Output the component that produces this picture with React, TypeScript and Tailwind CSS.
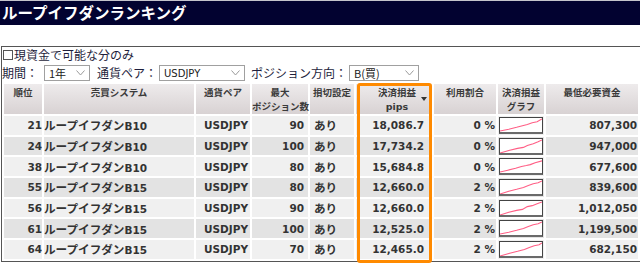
import React from "react";

const jp = "font-['Noto_Sans_CJK_JP',sans-serif]";
const num = "font-['DejaVu_Sans','Noto_Sans_CJK_JP',sans-serif]";

const rows = [
  { rank: 21, sys: "B10", max: 90, pips: "18,086.7", use: "0 %", min: "807,300", g: "0,14 9,12 17,10 24,8 28,7 33,5 38,4 43,1" },
  { rank: 24, sys: "B10", max: 100, pips: "17,734.2", use: "0 %", min: "947,000", g: "0,15 10,12 18,10 24,9 28,7 34,5 39,3 43,1" },
  { rank: 38, sys: "B10", max: 80, pips: "15,684.8", use: "0 %", min: "677,600", g: "0,14 8,12 16,10 22,8 27,7 31,6 36,4 43,2" },
  { rank: 55, sys: "B15", max: 80, pips: "12,660.0", use: "2 %", min: "839,600", g: "0,15 9,12 17,10 24,8 29,6 34,4 39,3 43,1" },
  { rank: 56, sys: "B15", max: 90, pips: "12,660.0", use: "2 %", min: "1,012,050", g: "0,15 9,12 17,10 23,9 28,6 33,5 38,3 43,1" },
  { rank: 61, sys: "B15", max: 100, pips: "12,525.0", use: "2 %", min: "1,199,500", g: "0,14 9,12 17,10 24,8 29,6 34,4 39,3 43,1" },
  { rank: 64, sys: "B15", max: 70, pips: "12,465.0", use: "2 %", min: "682,150", g: "0,15 10,12 18,10 25,8 30,6 35,4 40,3 43,1" },
];

function Chevron() {
  return (
    <svg width="9" height="6" viewBox="0 0 9 6" className="shrink-0">
      <polyline points="0.5,0.5 4.5,5 8.5,0.5" fill="none" stroke="#9a9a9a" strokeWidth="1" />
    </svg>
  );
}

function FakeSelect({ w, children }: { w: string; children: React.ReactNode }) {
  return (
    <div className={`${w} h-[16px] bg-white border border-[#a0a0a0] flex items-center justify-between pl-[4px] pr-[4px] text-[#222]`}>
      <span className="leading-none">{children}</span>
      <Chevron />
    </div>
  );
}

function Graph({ pts }: { pts: string }) {
  return (
    <div className="w-[44px] h-[17px] bg-white border border-[#444] border-b-2 border-b-[#6a6a6a]">
      <svg width="42" height="14" viewBox="0 0 43 15" preserveAspectRatio="none" className="block">
        <polyline points={pts} fill="none" stroke="#ff5f86" strokeWidth="1.2" />
      </svg>
    </div>
  );
}

export default function App() {
  const th = `${jp} bg-linear-to-b from-[#eeebec] to-[#d8d2d3] text-[9.5px] font-bold text-[#3a3a3a] leading-[14px] align-top text-center pt-[1px] h-[29px] whitespace-nowrap overflow-visible`;
  const td = "h-[18.7px] p-0 leading-[16px] font-bold text-[#333] whitespace-nowrap";
  return (
    <div className="w-[640px] h-[265px] bg-white overflow-hidden">
      {/* title bar */}
      <div className={`${jp} h-[25px] border-t border-[#c4c4cc] bg-[#020230] text-white text-[15.5px] font-bold flex items-center pl-[2px]`}>
        ループイフダンランキング
      </div>

      <div className="relative ml-[1px] mt-[21px] border-t border-l border-b border-[#555]">
        {/* filters */}
        <div className={`${jp} h-[16px] flex items-center text-[12px] text-[#1e1e3c] pl-[1px]`}>
          <span className="w-[10px] h-[10px] border border-[#555] mr-[1px]" />
          現資金で可能な分のみ
        </div>
        <div className={`${jp} h-[19px] flex items-center text-[12px] text-[#1e1e3c]`}>
          <span>期間：</span>
          <div className="ml-[6px]">
            <FakeSelect w="w-[46px]">
              <span className="text-[11px]">1年</span>
            </FakeSelect>
          </div>
          <span className="ml-[7px]">通貨ペア：</span>
          <div className="ml-[2px]">
            <FakeSelect w="w-[86px]">
              <span className={`${num} text-[10px]`}>USDJPY</span>
            </FakeSelect>
          </div>
          <span className="ml-[6px]">ポジション方向：</span>
          <div className="ml-[2px]">
            <FakeSelect w="w-[70px]">
              <span className="text-[11px]">B(買)</span>
            </FakeSelect>
          </div>
        </div>

        {/* ranking table */}
        <table className="table-fixed border-separate border-spacing-0.5 w-[638px] bg-white">
          <colgroup>
            <col className="w-[38px]" />
            <col className="w-[150px]" />
            <col className="w-[54px]" />
            <col className="w-[56px]" />
            <col className="w-[44px]" />
            <col className="w-[76px]" />
            <col className="w-[62px]" />
            <col className="w-[46px]" />
            <col className="w-[92px]" />
          </colgroup>
          <thead>
            <tr>
              <th className={th}>順位</th>
              <th className={th}>売買システム</th>
              <th className={th}>通貨ペア</th>
              <th className={th}>
                最大
                <br />
                ポジション数
              </th>
              <th className={th}>損切設定</th>
              <th className={`${th} relative`}>
                <span className="pl-[6px]">決済損益</span>
                <br />
                <span className={`${num} text-[9.5px] pl-[6px]`}>pips</span>
                <span className="absolute right-[5px] top-[13px] w-0 h-0 border-l-[3.5px] border-r-[3.5px] border-t-[4px] border-l-transparent border-r-transparent border-t-[#333]" />
              </th>
              <th className={th}>利用割合</th>
              <th className={th}>
                決済損益
                <br />
                グラフ
              </th>
              <th className={th}>最低必要資金</th>
            </tr>
          </thead>
          <tbody>
            {rows.map((r, i) => {
              const bg = i % 2 === 0 ? "bg-[#f0f0f0]" : "bg-[#e3e3e3]";
              return (
                <tr key={r.rank} className={bg}>
                  <td className={`${td} ${num} text-[10.5px] text-right`}>{r.rank}</td>
                  <td className={`${td} text-left`}>
                    <span className={`${jp} text-[11.6px]`}>ループイフダン</span>
                    <span className={`${num} text-[10.5px]`}>{r.sys}</span>
                  </td>
                  <td className={`${td} ${num} text-[10.5px] pl-[8px]`}>USDJPY</td>
                  <td className={`${td} ${num} text-[10.5px] text-right pr-[4px]`}>{r.max}</td>
                  <td className={`${td} ${jp} text-[11.6px] pl-[4px]`}>あり</td>
                  <td className={`${td} ${num} text-[10.5px] text-right pr-[8px]`}>{r.pips}</td>
                  <td className={`${td} ${num} text-[10.5px] text-right pr-[1px]`}>{r.use}</td>
                  <td className={`${td} pl-[1px] align-middle`}>
                    <Graph pts={r.g} />
                  </td>
                  <td className={`${td} ${num} text-[10.5px] text-right pr-[1px]`}>{r.min}</td>
                </tr>
              );
            })}
          </tbody>
        </table>

        {/* highlight around the pips column */}
        <div className="absolute left-[355px] top-[36px] w-[75px] h-[180px] border-[3px] border-[#ff8a00] rounded-[3px] pointer-events-none" />
      </div>
    </div>
  );
}
